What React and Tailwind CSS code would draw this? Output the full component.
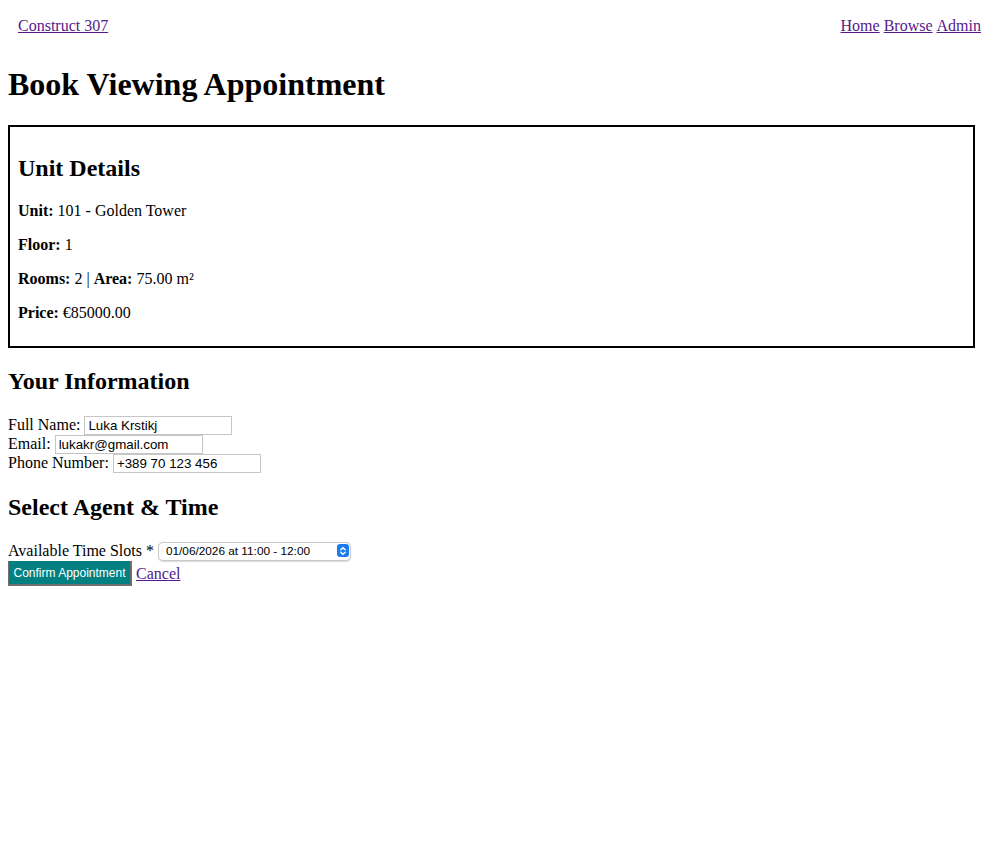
import React from "react";

const serif = { fontFamily: '"Liberation Serif", "Times New Roman", serif' };

function Field({ label, value, type = "text" }) {
  return (
    <div className="flex h-[19px] items-center gap-[4px]">
      <label className="leading-[normal]">{label}</label>
      <input
        type={type}
        defaultValue={value}
        className="h-[19px] w-[148px] border border-[#c6c6c6] bg-white px-[3px] text-[13.33px] leading-[normal] text-black outline-none"
        style={{ fontFamily: '"Liberation Sans", Arial, sans-serif' }}
      />
    </div>
  );
}

export default function App() {
  return (
    <div className="m-[8px] text-[16px] leading-[normal] text-black" style={serif}>
      <header className="flex w-[973px] items-center justify-between pt-[9px] pb-[10px] pl-[10px]">
        <a href="#" className="text-[#551a8b] underline">Construct 307</a>
        <nav className="flex gap-[4px]">
          <a href="#" className="text-[#551a8b] underline">Home</a>
          <a href="#" className="text-[#551a8b] underline">Browse</a>
          <a href="#" className="text-[#551a8b] underline">Admin</a>
        </nav>
      </header>

      <h1 className="my-[21.44px] text-[32px] font-bold leading-[normal]">Book Viewing Appointment</h1>

      <div className="w-[967px] border-2 border-black px-[8px] py-[8px]">
        <h2 className="my-[19.92px] text-[24px] font-bold leading-[normal]">Unit Details</h2>
        <p className="my-[16px]"><strong className="font-bold">Unit:</strong> 101 - Golden Tower</p>
        <p className="my-[16px]"><strong className="font-bold">Floor:</strong> 1</p>
        <p className="my-[16px]">
          <strong className="font-bold">Rooms:</strong> 2 | <strong className="font-bold">Area:</strong> 75.00 m²
        </p>
        <p className="my-[16px]"><strong className="font-bold">Price:</strong> €85000.00</p>
      </div>

      <form onSubmit={(e) => e.preventDefault()}>
        <h2 className="mt-[19.92px] mb-[19.92px] text-[24px] font-bold leading-[normal]">Your Information</h2>
        <div className="flex flex-col pt-[1px]">
          <Field label="Full Name:" value="Luka Krstikj" />
          <Field label="Email:" value="lukakr@gmail.com" type="email" />
          <Field label="Phone Number:" value="+389 70 123 456" />
        </div>

        <h2 className="mt-[21.5px] mb-[18.3px] text-[24px] font-bold leading-[normal]">Select Agent &amp; Time</h2>

        <div className="flex h-[21px] items-end gap-[4px] pt-[2px]">
          <label className="leading-[normal]">Available Time Slots *</label>
          <div className="relative h-[19px] w-[193px]">
            <select
              defaultValue="1"
              className="h-[19px] w-[193px] appearance-none rounded-[5px] border border-[#c9c9c9] bg-white pl-[7px] pr-[18px] text-[11.8px] leading-[normal] text-black shadow-[0_0.5px_1px_rgba(0,0,0,0.15)] outline-none"
              style={{ fontFamily: '"Liberation Sans", Arial, sans-serif' }}
            >
              <option value="1">01/06/2026 at 11:00 - 12:00</option>
            </select>
            <span className="pointer-events-none absolute right-[2px] top-[3px] flex h-[13px] w-[12px] items-center justify-center rounded-[3px] bg-[#1a7cf5]">
              <svg width="8" height="10" viewBox="0 0 8 10" fill="none" stroke="white" strokeWidth="1.4" strokeLinecap="round" strokeLinejoin="round">
                <path d="M1.8 3.8 L4 1.7 L6.2 3.8" />
                <path d="M1.8 6.2 L4 8.3 L6.2 6.2" />
              </svg>
            </span>
          </div>
        </div>

        <div className="flex h-[26px] items-center gap-[4px] pt-[1px]">
          <button
            type="submit"
            className="flex h-[25px] w-[124px] items-center justify-center border-b-2 border-l border-r-2 border-t-0 border-[#6f6f6f] bg-[#008080] text-[12px] font-medium leading-[normal] text-white"
            style={{ fontFamily: '"Liberation Sans", Arial, sans-serif' }}
          >
            Confirm Appointment
          </button>
          <a href="#" className="text-[#551a8b] underline">Cancel</a>
        </div>
      </form>
    </div>
  );
}
